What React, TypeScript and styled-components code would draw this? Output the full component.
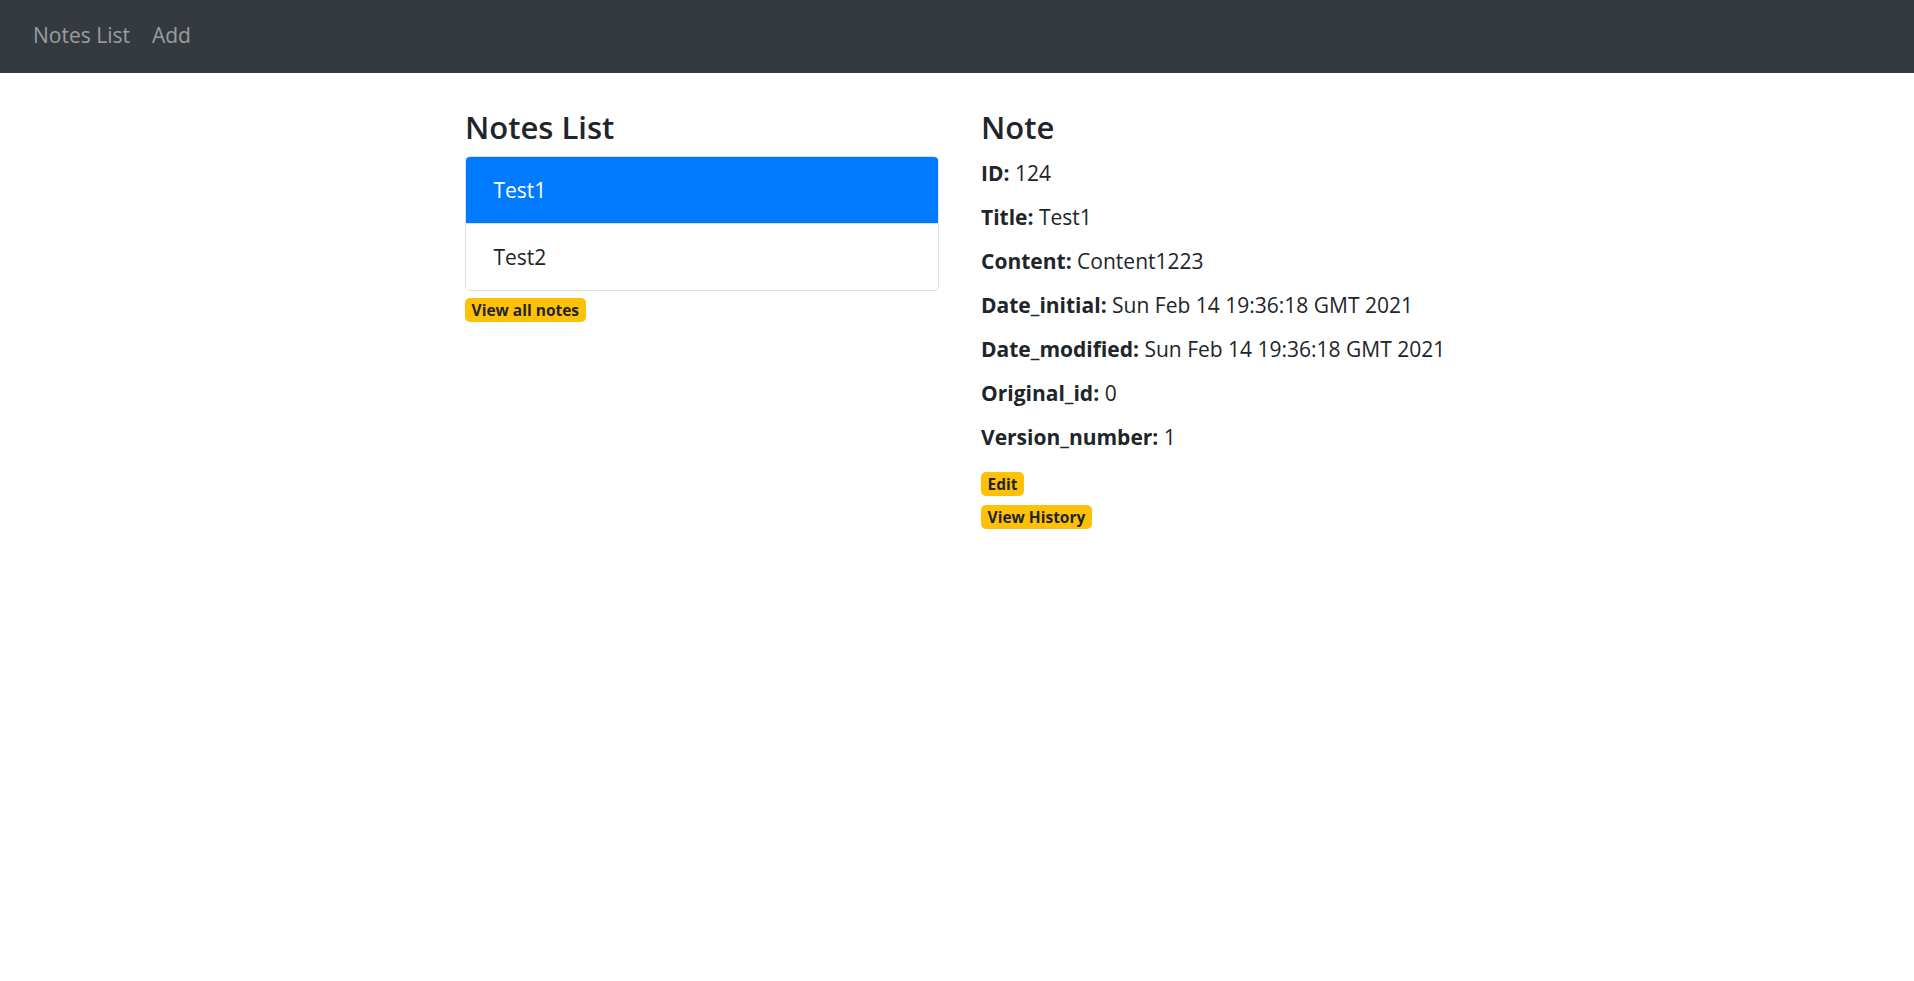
import React from "react";
import styled, { createGlobalStyle } from "styled-components";

const GlobalStyle = createGlobalStyle`
  * {
    box-sizing: border-box;
  }

  body {
    margin: 0;
    background: #fff;
    color: #212529;
    font-family: "Open Sans", "Noto Sans", Arial, sans-serif;
    font-size: 21px;
    line-height: 33px;
  }
`;

const NavBar = styled.nav`
  display: flex;
  height: 73px;
  padding: 19px 22px 0;
  background: #343a40;
`;

const NavLink = styled.a`
  padding: 0 11px;
  color: rgba(255, 255, 255, 0.5);
  font-size: 21px;
  line-height: 33px;
  text-decoration: none;
  cursor: pointer;
`;

const Main = styled.main`
  padding-top: 35px;
`;

const ListRow = styled.div`
  display: flex;
  width: 1038px;
  margin: 0 auto;
  padding-left: 6px;
`;

const Column = styled.div`
  flex: 0 0 50%;
  padding: 0 21px;
`;

const Heading = styled.h4`
  margin: 0 0 10px;
  font-size: 31px;
  font-weight: 600;
  line-height: 38px;
`;

const ListGroup = styled.ul`
  margin: 0;
  padding: 0;
  list-style: none;
  border: 1px solid rgba(0, 0, 0, 0.125);
  border-radius: 5px;
  overflow: hidden;
`;

const ListItem = styled.li<{ $active?: boolean }>`
  padding: 17px 27.5px 16px;
  background: ${(p) => (p.$active ? "#007bff" : "#fff")};
  color: ${(p) => (p.$active ? "#fff" : "#212529")};
  border-top: ${(p) => (p.$active ? "none" : "1px solid rgba(0, 0, 0, 0.125)")};
  cursor: pointer;
`;

const BadgeLine = styled.div`
  display: flex;
  align-items: center;
  height: 33px;
  padding-top: 5px;
`;

const Badge = styled.a`
  display: inline-block;
  padding: 4px 6.6px;
  border-radius: 5px;
  background: #ffc107;
  color: #212529;
  font-size: 15.5px;
  font-weight: 700;
  line-height: 16.5px;
  text-decoration: none;
  cursor: pointer;
`;

const Fields = styled.div`
  padding-top: 1px;
`;

const Field = styled.div`
  height: 44px;
`;

const Label = styled.strong`
  font-weight: 700;
`;

const fields: [string, string][] = [
  ["ID", "124"],
  ["Title", "Test1"],
  ["Content", "Content1223"],
  ["Date_initial", "Sun Feb 14 19:36:18 GMT 2021"],
  ["Date_modified", "Sun Feb 14 19:36:18 GMT 2021"],
  ["Original_id", "0"],
  ["Version_number", "1"],
];

const App = () => {
  return (
    <>
      <GlobalStyle />
      <NavBar>
        <NavLink>Notes List</NavLink>
        <NavLink>Add</NavLink>
      </NavBar>
      <Main>
        <ListRow>
          <Column>
            <Heading>Notes List</Heading>
            <ListGroup>
              <ListItem $active>Test1</ListItem>
              <ListItem>Test2</ListItem>
            </ListGroup>
            <BadgeLine>
              <Badge>View all notes</Badge>
            </BadgeLine>
          </Column>
          <Column>
            <Heading>Note</Heading>
            <Fields>
              {fields.map(([name, value]) => (
                <Field key={name}>
                  <Label>{name}:</Label> {value}
                </Field>
              ))}
            </Fields>
            <BadgeLine>
              <Badge>Edit</Badge>
            </BadgeLine>
            <BadgeLine>
              <Badge>View History</Badge>
            </BadgeLine>
          </Column>
        </ListRow>
      </Main>
    </>
  );
};

export default App;
